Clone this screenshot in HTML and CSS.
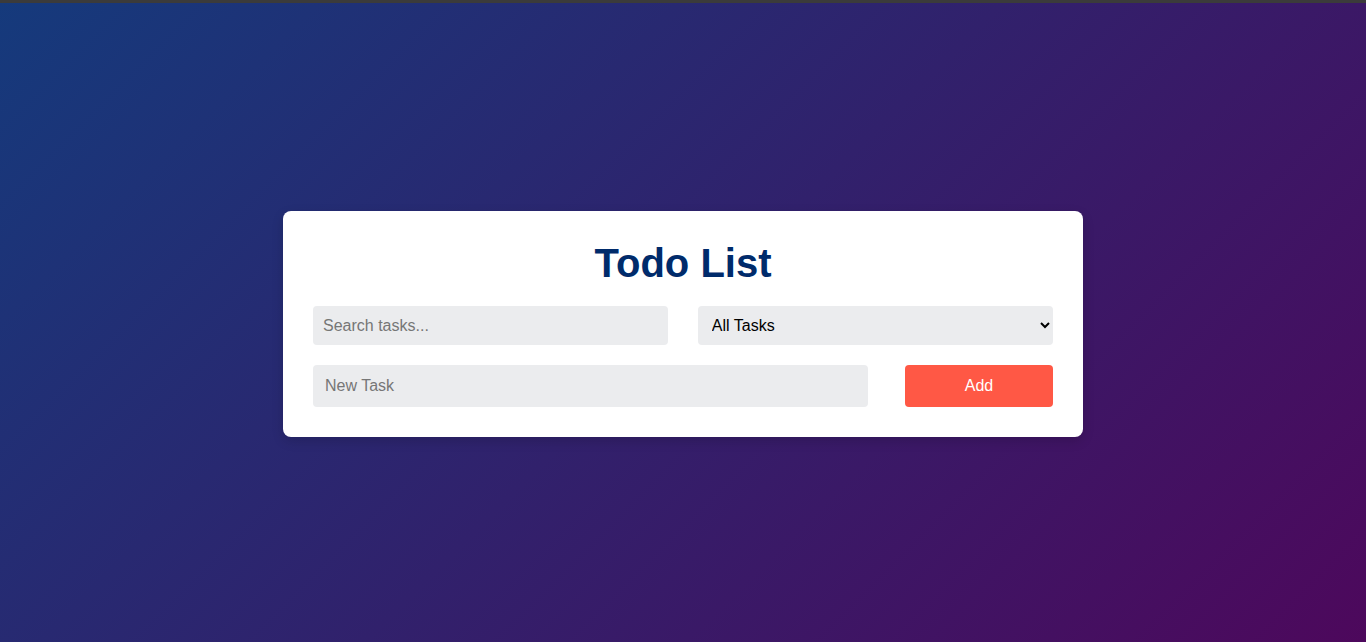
FILE: index.html
```html
<!DOCTYPE html>
<html lang="en">
<head>
<meta charset="UTF-8">
<title>Todo List</title>
<link rel="stylesheet" href="styles.css">
</head>
<body>
<div class="topbar"></div>
<main class="page">
  <div class="card">
    <h1 class="title">Todo List</h1>
    <div class="row">
      <input class="field search" type="text" placeholder="Search tasks...">
      <select class="field filter">
        <option>All Tasks</option>
        <option>Completed</option>
        <option>Pending</option>
      </select>
    </div>
    <div class="row row-add">
      <input class="field newtask" type="text" placeholder="New Task">
      <button class="add-btn">Add</button>
    </div>
  </div>
</main>
</body>
</html>
```
FILE: styles.css
```css
* { box-sizing: border-box; }
html, body { height: 100%; }
body {
  margin: 0;
  font-family: "Liberation Sans", Arial, sans-serif;
  background: linear-gradient(135deg, #153a7c 0%, #4d085c 100%);
  display: flex;
  flex-direction: column;
}
.topbar {
  height: 3px;
  background: #3b3b3b;
  flex: none;
}
.page {
  flex: 1;
  display: flex;
  align-items: center;
  justify-content: center;
  padding-top: 3px;
}
.card {
  width: 800px;
  background: #fff;
  border-radius: 8px;
  padding: 30px;
  box-shadow: 0 4px 12px rgba(0,0,0,0.15);
}
.title {
  margin: 0 0 20px;
  text-align: center;
  font-size: 40px;
  font-weight: bold;
  color: #002b6b;
  line-height: 45px;
}
.row {
  display: flex;
  justify-content: space-between;
  margin-bottom: 20px;
}
.row-add { margin-bottom: 0; }
.field {
  font-family: "Liberation Sans", Arial, sans-serif;
  font-size: 16px;
  border: none;
  border-radius: 4px;
  background: #ebecee;
  color: #000;
  outline: none;
}
.field::placeholder { color: #767676; }
.search, .filter {
  width: 48%;
  height: 39px;
  padding: 10px;
}
.filter { padding: 0 6px 0 10px; }
.newtask {
  width: 75%;
  height: 42px;
  padding: 12px;
}
.add-btn {
  width: 20%;
  height: 42px;
  border: none;
  border-radius: 4px;
  background: #ff5845;
  color: #fff;
  font-family: "Liberation Sans", Arial, sans-serif;
  font-size: 16px;
  cursor: pointer;
}
```
